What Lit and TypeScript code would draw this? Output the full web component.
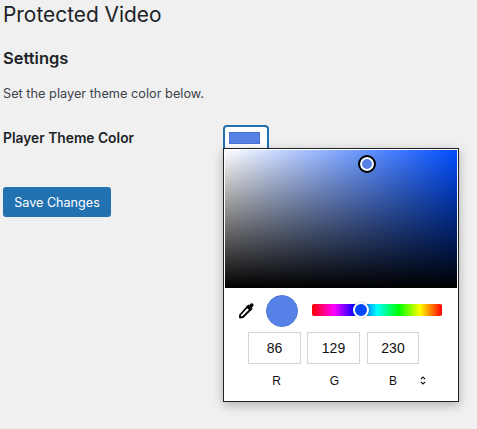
import { LitElement, html, css } from "lit";
import { customElement } from "lit/decorators.js";

@customElement("app-root")
export class AppRoot extends LitElement {
  static styles = css`
    :host {
      display: block;
      height: 429px;
      background: #f0f0f1;
      color: #1d2327;
      font-family: Inter, "Liberation Sans", sans-serif;
      overflow: hidden;
    }
    .page { padding: 0 0 0 3px; }
    h1 { margin: 0; padding-top: 1px; font-size: 20.9px; line-height: 27px; font-weight: 400; }
    h2 { margin: 20px 0 0; font-size: 16.5px; line-height: 20px; font-weight: 600; }
    .desc { margin: 17px 0 0; font-size: 12.75px; line-height: 18px; color: #3c434a; }
    .row { display: flex; margin-top: 23px; height: 50px; }
    .label { width: 221px; font-size: 13.8px; line-height: 24px; font-weight: 600; }
    .field { position: relative; }
    .swatch {
      box-sizing: border-box; width: 46px; height: 26px; padding: 5px 7px 0 4px; margin: -1px 0 0 -1px;
      border: 2px solid #2271b1; border-radius: 4px 4px 0 0; border-bottom: 0; background: #fff;
    }
    .swatch div { height: 12px; background: #5681e6; border: 1px solid #4a72d0; box-sizing: border-box; }
    .popover {
      position: absolute; left: -1px; top: 22px; z-index: 2; box-sizing: border-box; width: 236px; height: 254px;
      background: #fff; border: 1px solid #1d2327; box-shadow: 0 3px 10px rgba(0,0,0,.28);
      padding-top: 1px; padding-left: 1px;
    }
    .sat {
      position: relative; width: 232px; height: 138px;
      background: linear-gradient(to top, #000, transparent), linear-gradient(to right, #fff, #004dff);
    }
    .sat-thumb {
      position: absolute; left: 135px; top: 7px; width: 10px; height: 10px; border-radius: 50%;
      background: #5681e6; border: 2px solid #fff; outline: 2px solid #000;
    }
    .controls { display: flex; align-items: center; padding: 7px 0 0 12px; height: 32px; }
    .drop { width: 18px; height: 18px; display: block; }
    .preview { width: 32px; height: 32px; border-radius: 50%; background: #5681e6; margin-left: 11px; border: 1px solid #4f78d8; box-sizing: border-box; }
    .hue {
      position: relative; width: 130px; height: 12px; margin: 0 0 2px 14px; border-radius: 2px;
      background: linear-gradient(to right, #f00, #f0f 17%, #00f 33%, #0ff 50%, #0f0 67%, #ff0 83%, #f00);
    }
    .hue-thumb {
      position: absolute; left: 41px; top: -2px; width: 12px; height: 12px; border-radius: 50%;
      background: #0047ff; border: 2px solid #fff; box-shadow: 0 0 1px rgba(0,0,0,.5);
      box-sizing: content-box; 
    }
    .inputs { display: flex; gap: 6px; padding: 5px 0 0 23px; }
    .inputs div {
      box-sizing: border-box; height: 32px; border: 1px solid #d5d5d5; background: #fff;
      display: flex; align-items: center; justify-content: center;
      font: 14px "Liberation Sans", Arial, sans-serif; color: #111; 
    }
    .inputs .w3 { margin-left: 1px; }
    .w1 { width: 53px; } .w2 { width: 53px; } .w3 { width: 52px; }
    .letters { position: relative; display: flex; gap: 6px; padding: 10px 0 0 25px; font: 12px/14px "Liberation Sans", Arial, sans-serif; color: #111; }
    .letters span { text-align: center; }
    .letters .w2 { margin-left: -1px; }
    .chev { position: absolute; left: 195px; top: 12px; width: 6px; height: 9px; display: block; }
    .btn {
      display: inline-block; box-sizing: border-box; height: 30px; width: 108px; text-align: center;
      background: #2271b1; color: #fff; border-radius: 3px;
      font-size: 12.6px; line-height: 31px; 
    }
    .actions { margin-top: 11px; }
  `;
  render() {
    return html`
      <div class="page">
        <h1>Protected Video</h1>
        <h2>Settings</h2>
        <p class="desc">Set the player theme color below.</p>
        <div class="row">
          <div class="label">Player Theme Color</div>
          <div class="field">
            <div class="swatch"><div></div></div>
            <div class="popover">
              <div class="sat"><div class="sat-thumb"></div></div>
              <div class="controls">
                <svg class="drop" viewBox="0 0 18 18">
                  <path d="M11.5 3.5 L14.5 6.5 L6 15 L3 15.6 L3 13 Z" fill="#fff" stroke="#000" stroke-width="1.8" stroke-linejoin="round"/>
                  <path d="M10 3.5 L11.5 5 L13.5 1.8 Q15 0.8 16.2 2 Q17.2 3.2 16 4.6 L13 6.5 L14.5 8 L13 9 L9 5 Z" fill="#000"/>
                </svg>
                <div class="preview"></div>
                <div class="hue"><div class="hue-thumb"></div></div>
              </div>
              <div class="inputs">
                <div class="w1">86</div><div class="w2">129</div><div class="w3">230</div>
              </div>
              <div class="letters">
                <span class="w1">R</span><span class="w2">G</span><span class="w3">B</span>
                <svg class="chev" viewBox="0 0 6 9" fill="none" stroke="#111" stroke-width="1.1"><path d="M.8 3.2 3 1l2.2 2.2M.8 5.8 3 8l2.2-2.2"/></svg>
              </div>
            </div>
          </div>
        </div>
        <div class="actions"><span class="btn">Save Changes</span></div>
      </div>
    `;
  }
}
